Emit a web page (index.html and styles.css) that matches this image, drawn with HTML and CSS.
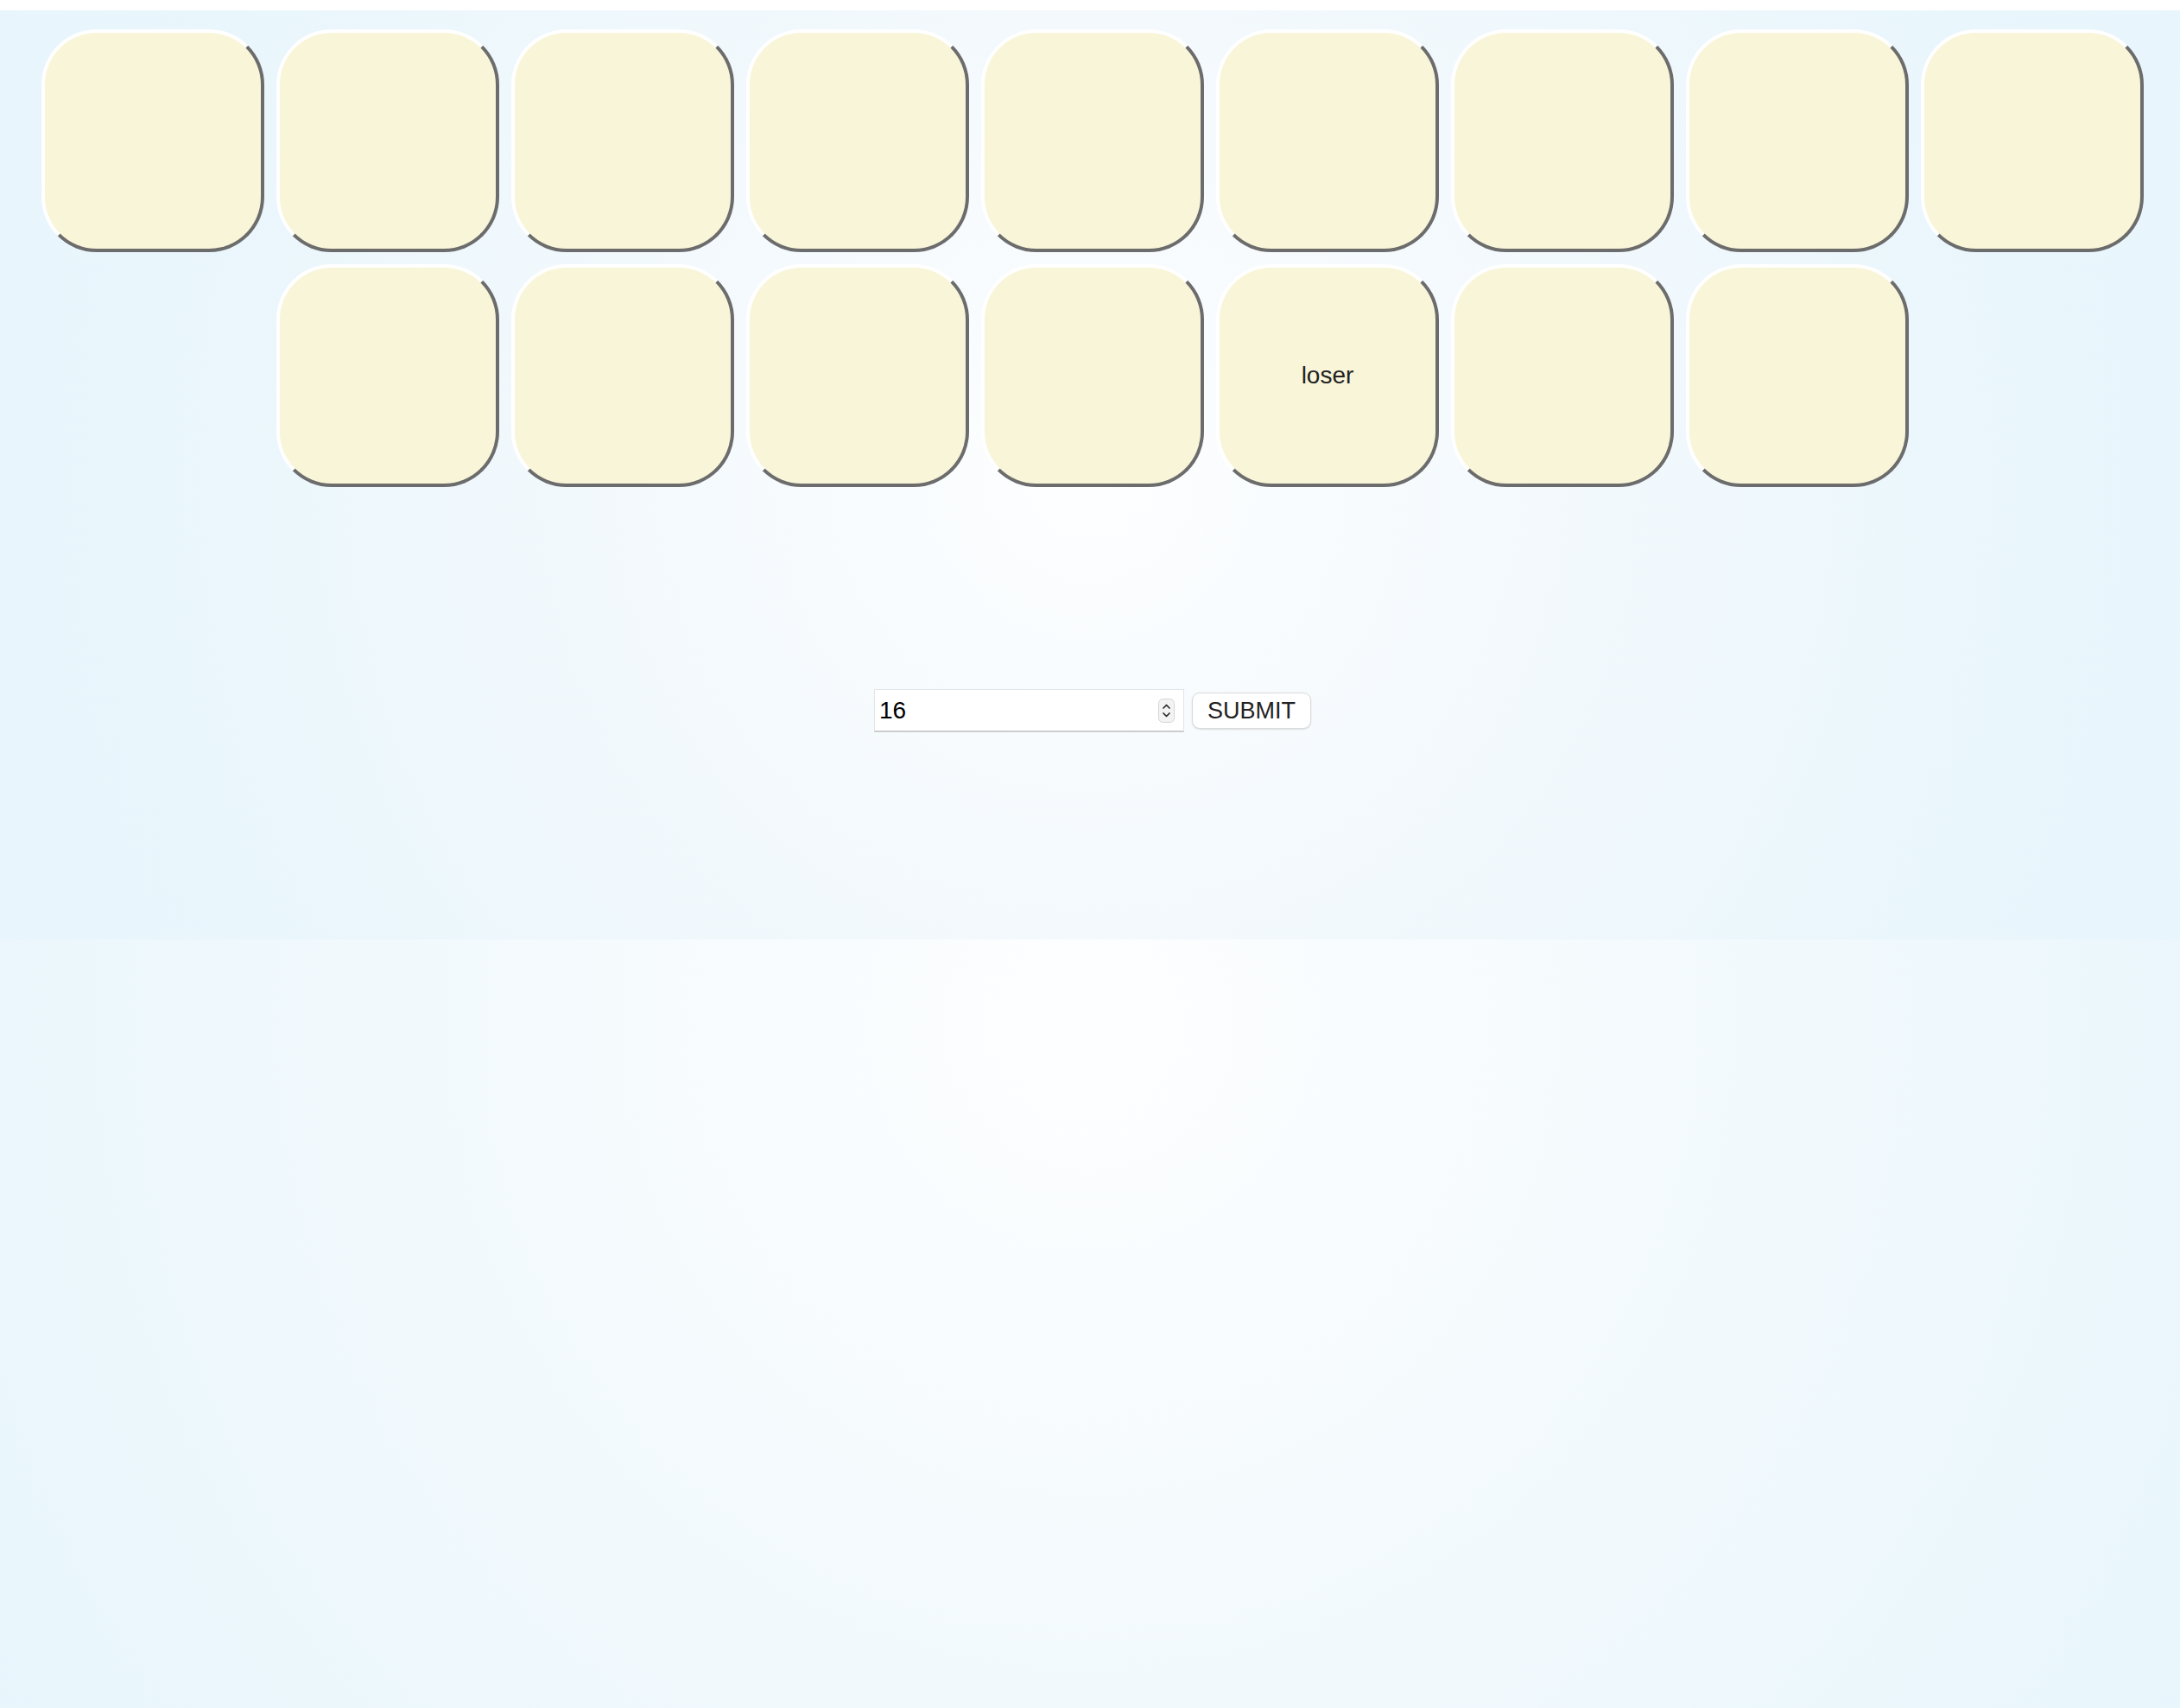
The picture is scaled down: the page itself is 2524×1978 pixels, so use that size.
FILE: index.html
```html
<!DOCTYPE html>
<html lang="en">
<head>
<meta charset="utf-8">
<title>Cards</title>
<link rel="stylesheet" href="styles.css">
</head>
<body>
<div class="strip"></div>
<main class="page">
  <div class="board">
    <div class="card"></div>
    <div class="card"></div>
    <div class="card"></div>
    <div class="card"></div>
    <div class="card"></div>
    <div class="card"></div>
    <div class="card"></div>
    <div class="card"></div>
    <div class="card"></div>
    <div class="card"></div>
    <div class="card"></div>
    <div class="card"></div>
    <div class="card"></div>
    <div class="card">loser</div>
    <div class="card"></div>
    <div class="card"></div>
  </div>
  <form class="controls">
    <div class="field">
      <input class="num" type="text" value="16">
      <span class="spin">
        <svg width="19" height="28" viewBox="0 0 19 28">
          <rect x="0.5" y="0.5" width="18" height="27" rx="5" fill="#f3f3f3" stroke="#d4d4d4"/>
          <path d="M6 11 L9.5 7.5 L13 11" fill="none" stroke="#2a2a2a" stroke-width="1.7" stroke-linecap="round" stroke-linejoin="round"/>
          <path d="M6 17 L9.5 20.5 L13 17" fill="none" stroke="#2a2a2a" stroke-width="1.7" stroke-linecap="round" stroke-linejoin="round"/>
        </svg>
      </span>
    </div>
    <button class="submit" type="button">SUBMIT</button>
  </form>
</main>
</body>
</html>
```
FILE: styles.css
```css
html {
  height: 100%;
  background: radial-gradient(circle farthest-corner at 50% 60%, #fdfeff 0%, #f4fafd 38%, #e9f6fc 80%, #e8f5fc 100%);
}
body {
  margin: 0;
  font-family: "Liberation Sans", Arial, sans-serif;
}
.strip {
  height: 12px;
  background: #ffffff;
}
.page {
  box-sizing: border-box;
  height: 1076px;
  padding-top: 15px;
  background: radial-gradient(circle farthest-corner at 50% 50%, #fdfeff 0%, #f3f9fd 39%, #e9f6fc 80%, #e8f5fc 100%);
}
.board {
  display: flex;
  flex-wrap: wrap;
  justify-content: center;
  width: 2516px;
  margin-left: 7px;
}
.card {
  box-sizing: border-box;
  width: 258px;
  height: 258px;
  margin: 7px;
  border: 4px solid;
  border-color: #ffffff #6c6c6c #6c6c6c #ffffff;
  border-radius: 64px;
  background: #f8f5d8;
  display: flex;
  align-items: center;
  justify-content: center;
  font-size: 28px;
  color: #222222;
}
.controls {
  display: flex;
  align-items: center;
  justify-content: center;
  gap: 9px;
  margin: 227px 0 0;
  padding-left: 6px;
}
.field {
  box-sizing: border-box;
  width: 359px;
  height: 50px;
  display: flex;
  align-items: center;
  background: #ffffff;
  border: 1px solid #e2e6e9;
  border-bottom: 2px solid #cbcdcf;
  padding: 0 10px 0 5px;
}
.num {
  flex: 1;
  min-width: 0;
  border: none;
  outline: none;
  background: transparent;
  font-family: "Liberation Sans", Arial, sans-serif;
  font-size: 28px;
  color: #000000;
  padding: 0;
}
.spin {
  display: flex;
  width: 19px;
  height: 28px;
}
.submit {
  box-sizing: border-box;
  width: 138px;
  height: 42px;
  padding: 0;
  background: #ffffff;
  border: 1px solid #dadada;
  border-radius: 9px;
  box-shadow: 0 1px 2px rgba(0, 0, 0, 0.12);
  font-family: "Liberation Sans", Arial, sans-serif;
  font-size: 27px;
  color: #222222;
}
```
